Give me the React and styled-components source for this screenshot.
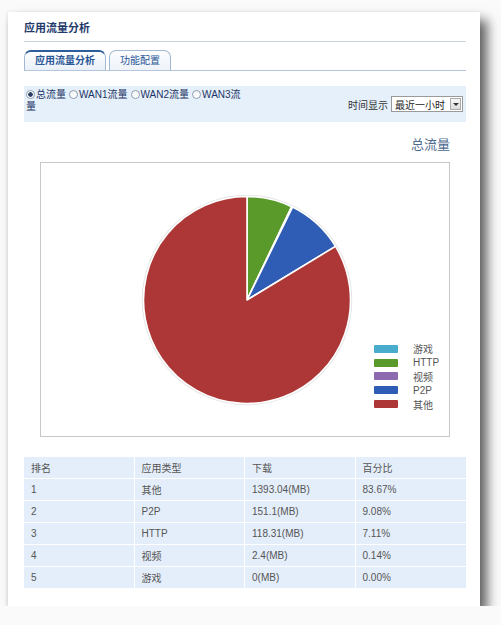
import React from "react";
import styled, { createGlobalStyle } from "styled-components";

const Global = createGlobalStyle`
  html, body { margin: 0; padding: 0; background: #fafafa; }
  body { font-family: "Liberation Sans", "Noto Sans CJK SC", sans-serif; }
`;

const Card = styled.div`
  margin: 12px 0 0 8px;
  width: 472px;
  height: 594px;
  box-sizing: border-box;
  background: #fff;
  padding: 9px 14px 0 16px;
  box-shadow: 7px 8px 11px rgba(0, 0, 0, 0.62), -1px 0 3px rgba(0, 0, 0, 0.08);
`;

const Title = styled.div`
  font-size: 11px;
  font-weight: bold;
  line-height: 14px;
  color: #1f3a6b;
  padding: 0 0 6px 0;
  border-bottom: 1px solid #c6d4e4;
`;

const Tabs = styled.div`
  margin-top: 8px;
  display: flex;
  gap: 3px;
  border-bottom: 1px solid #b4c6dc;
`;

const Tab = styled.div`
  box-sizing: border-box;
  height: 20px;
  padding: 0 10px;
  font-size: 10px;
  line-height: ${(p) => (p.$active ? "17px" : "19px")};
  color: #2b5797;
  border: 1px solid #a3b8d2;
  border-bottom: none;
  border-top: ${(p) => (p.$active ? "2px solid #2e5d9c" : "1px solid #a3b8d2")};
  border-radius: 7px 7px 0 0;
  background: ${(p) =>
    p.$active
      ? "linear-gradient(#ffffff, #e9f0f8)"
      : "linear-gradient(#fbfcfe, #eef3f9)"};
  font-weight: ${(p) => (p.$active ? "bold" : "normal")};
`;

const OptionBar = styled.div`
  margin-top: 15px;
  height: 36px;
  box-sizing: border-box;
  background: #e6f0fa;
  display: flex;
  justify-content: space-between;
  padding: 3px 3px 0 2px;
`;

const Options = styled.div`
  width: 222px;
  font-size: 10px;
  line-height: 12px;
  color: #1c3566;
`;

const Opt = styled.span`
  margin-right: 3px;
`;

const Radio = styled.span`
  display: inline-block;
  box-sizing: border-box;
  width: 9px;
  height: 9px;
  border-radius: 50%;
  border: 1px solid #8e9db3;
  background: ${(p) =>
    p.$checked
      ? "radial-gradient(circle, #2a3f66 0 2px, #fff 2.5px)"
      : "linear-gradient(#f4f4f4, #fff)"};
  vertical-align: -1px;
  margin-right: 1px;
`;

const TimeCtrl = styled.div`
  align-self: center;
  margin-top: -3px;
  display: flex;
  align-items: center;
  gap: 3px;
  font-size: 10px;
  color: #333;
`;

const Select = styled.div`
  display: flex;
  align-items: center;
  box-sizing: border-box;
  height: 16px;
  border: 1px solid #9a9a9a;
  background: #fff;
  padding-left: 3px;
  font-size: 10px;
  color: #222;
`;

const SelectText = styled.span`
  width: 55px;
`;

const Arrow = styled.span`
  box-sizing: border-box;
  width: 11px;
  height: 12px;
  margin-right: 1px;
  border: 1px solid #aaa;
  background: linear-gradient(#f8f8f8, #dcdcdc);
  display: flex;
  align-items: center;
  justify-content: center;
  &::after {
    content: "";
    border-left: 3px solid transparent;
    border-right: 3px solid transparent;
    border-top: 3px solid #333;
  }
`;

const ChartSection = styled.div`
  margin: 0 16px;
`;

const ChartTitle = styled.div`
  margin-top: 16px;
  text-align: right;
  font-size: 13px;
  line-height: 14px;
  color: #4d6a8e;
`;

const ChartBox = styled.div`
  position: relative;
  margin-top: 10px;
  height: 275px;
  box-sizing: border-box;
  border: 1px solid #c8c8c8;
  display: flex;
  align-items: center;
  justify-content: center;
  padding-left: 3px;
`;

const Legend = styled.div`
  position: absolute;
  left: 333px;
  top: 179px;
`;

const LegendRow = styled.div`
  display: flex;
  align-items: center;
  height: 13.8px;
`;

const Swatch = styled.span`
  width: 24px;
  height: 8px;
  border-radius: 1px;
  background: ${(p) => p.$color};
`;

const LegendLabel = styled.span`
  margin-left: 15px;
  font-size: 10px;
  color: #555;
`;

const Table = styled.table`
  margin-top: 20px;
  width: 442px;
  border-collapse: separate;
  border-spacing: 0;
  table-layout: fixed;
`;

const Cell = styled.td`
  height: 22px;
  box-sizing: border-box;
  padding: 0 0 0 7px;
  background: #e4eefa;
  border-right: 1px solid #fff;
  border-bottom: 1px solid #fff;
  font-size: 10px;
  color: #555;
  font-weight: normal;
  text-align: left;
  &:last-child { border-right: none; }
`;

const slices = [
  { name: "游戏", value: 0, color: "#4aaccc" },
  { name: "HTTP", value: 7.11, color: "#5a9a2a" },
  { name: "视频", value: 0.14, color: "#8c6ab0" },
  { name: "P2P", value: 9.08, color: "#2f5cb5" },
  { name: "其他", value: 83.67, color: "#ad3636" },
];

const rows = [
  ["1", "其他", "1393.04(MB)", "83.67%"],
  ["2", "P2P", "151.1(MB)", "9.08%"],
  ["3", "HTTP", "118.31(MB)", "7.11%"],
  ["4", "视频", "2.4(MB)", "0.14%"],
  ["5", "游戏", "0(MB)", "0.00%"],
];

const options = ["总流量", "WAN1流量", "WAN2流量", "WAN3流量"];

function Pie() {
  const cx = 106, cy = 106, r = 103.5;
  const total = slices.reduce((s, x) => s + x.value, 0);
  let a0 = -Math.PI / 2;
  const paths = [];
  slices.forEach((s) => {
    if (s.value <= 0) return;
    const a1 = a0 + (s.value / total) * Math.PI * 2;
    const x0 = cx + r * Math.cos(a0), y0 = cy + r * Math.sin(a0);
    const x1 = cx + r * Math.cos(a1), y1 = cy + r * Math.sin(a1);
    const large = a1 - a0 > Math.PI ? 1 : 0;
    paths.push(
      <path
        key={s.name}
        d={`M${cx},${cy} L${x0},${y0} A${r},${r} 0 ${large} 1 ${x1},${y1} Z`}
        fill={s.color}
        stroke="#fff"
        strokeWidth="1.6"
        strokeLinejoin="round"
      />
    );
    a0 = a1;
  });
  return (
    <svg width="212" height="212" viewBox="0 0 212 212">
      <circle cx={cx} cy={cy} r={r + 1} fill="none" stroke="rgba(0,0,0,0.1)" strokeWidth="1.5" />
      {paths}
    </svg>
  );
}

export default function App() {
  return (
    <>
      <Global />
      <Card>
        <Title>应用流量分析</Title>
        <Tabs>
          <Tab $active>应用流量分析</Tab>
          <Tab>功能配置</Tab>
        </Tabs>
        <OptionBar>
          <Options>
            {options.map((o, i) => (
              <Opt key={o}>
                <Radio $checked={i === 0} />
                {o}
              </Opt>
            ))}
          </Options>
          <TimeCtrl>
            时间显示
            <Select>
              <SelectText>最近一小时</SelectText>
              <Arrow />
            </Select>
          </TimeCtrl>
        </OptionBar>
        <ChartSection>
          <ChartTitle>总流量</ChartTitle>
          <ChartBox>
            <Pie />
            <Legend>
              {slices.map((s) => (
                <LegendRow key={s.name}>
                  <Swatch $color={s.color} />
                  <LegendLabel>{s.name}</LegendLabel>
                </LegendRow>
              ))}
            </Legend>
          </ChartBox>
        </ChartSection>
        <Table>
          <tbody>
            <tr>
              <Cell as="th">排名</Cell>
              <Cell as="th">应用类型</Cell>
              <Cell as="th">下载</Cell>
              <Cell as="th">百分比</Cell>
            </tr>
            {rows.map((r) => (
              <tr key={r[0]}>
                {r.map((c, i) => (
                  <Cell key={i}>{c}</Cell>
                ))}
              </tr>
            ))}
          </tbody>
        </Table>
      </Card>
    </>
  );
}
